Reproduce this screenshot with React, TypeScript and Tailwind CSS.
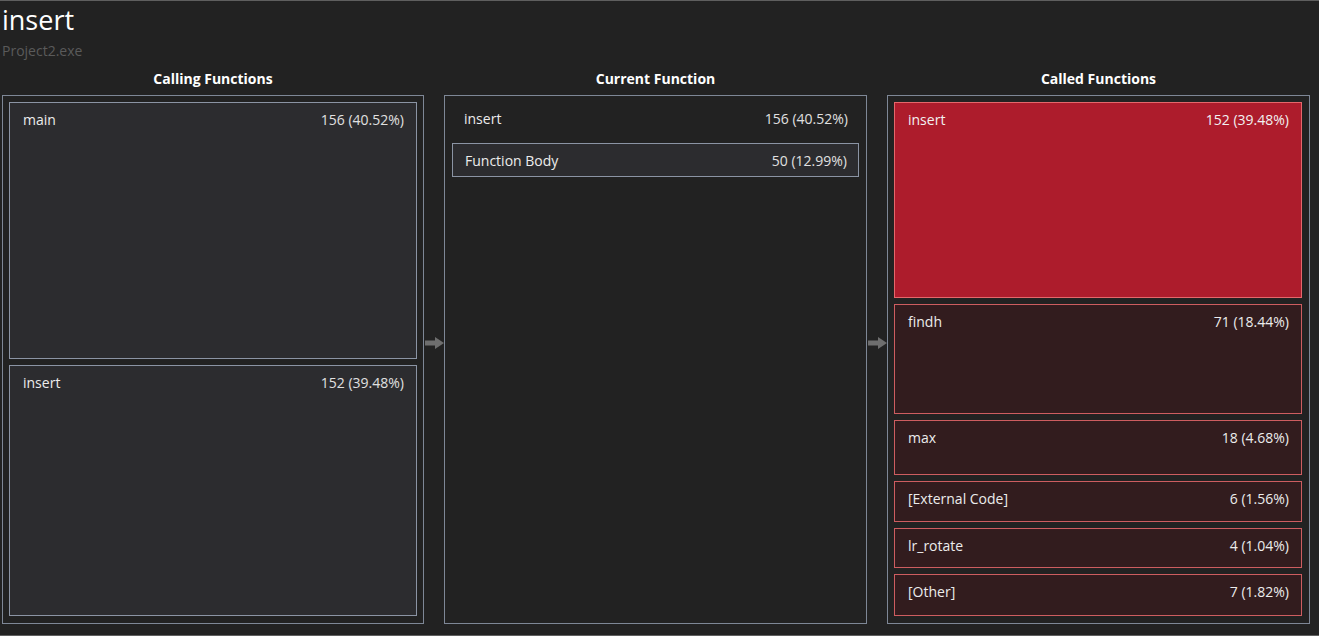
import React from "react";

type Entry = {
  name: string;
  value: string;
  h: string;
};

const calling: Entry[] = [
  { name: "main", value: "156 (40.52%)", h: "h-[257px]" },
  { name: "insert", value: "152 (39.48%)", h: "h-[251px]" },
];

const called: Entry[] = [
  { name: "insert", value: "152 (39.48%)", h: "h-[196px]" },
  { name: "findh", value: "71 (18.44%)", h: "h-[110px]" },
  { name: "max", value: "18 (4.68%)", h: "h-[55px]" },
  { name: "[External Code]", value: "6 (1.56%)", h: "h-[41px]" },
  { name: "lr_rotate", value: "4 (1.04%)", h: "h-[40px]" },
  { name: "[Other]", value: "7 (1.82%)", h: "h-[42px]" },
];

const Arrow = () => (
  <div className="w-[20px] flex justify-center shrink-0 mb-[4px]">
    <svg width="19" height="12" viewBox="0 0 19 12">
      <path d="M0 3.5h10V0l9 6-9 6V8.5H0z" fill="#6e6e6e" />
    </svg>
  </div>
);

const Column = ({
  title,
  width,
  inner,
  children,
}: {
  title: string;
  width: string;
  inner: string;
  children: React.ReactNode;
}) => (
  <div className={`flex flex-col ${width} shrink-0`}>
    <div className="h-[29px] pb-[4px] flex items-center justify-center text-[14px] font-bold text-white">
      {title}
    </div>
    <div className={`h-[529px] border border-[#7e8796] ${inner} flex flex-col gap-[6px]`}>
      {children}
    </div>
  </div>
);

const App = () => {
  return (
    <div
      className="w-[1319px] h-[636px] bg-[#222222] border-t border-b border-[#5f5f5f] overflow-hidden text-[14px]"
      style={{ fontFamily: '"Open Sans", "Noto Sans", sans-serif' }}
    >
      <div className="pl-[2px] pt-[2px]">
        <h1 className="text-[27px] leading-[34px] text-white">insert</h1>
        <div className="text-[14px] leading-[20px] text-[#5a5a5a] mt-[4px]">
          Project2.exe
        </div>
      </div>

      <div className="flex items-center pl-[2px] mt-[5px]">
        <Column title="Calling Functions" width="w-[422px]" inner="p-[6px]">
          {calling.map((e) => (
            <div
              key={e.name}
              className={`${e.h} shrink-0 bg-[#2c2c2f] border border-[#8b94a4] flex justify-between pl-[13px] pr-[12px] pt-[6px] text-[#ececec]`}
            >
              <span>{e.name}</span>
              <span className="text-[#e0e0e0]">{e.value}</span>
            </div>
          ))}
        </Column>

        <Arrow />

        <Column title="Current Function" width="w-[423px]" inner="p-[6px]">
          <div className="flex justify-between pl-[13px] pr-[12px] pt-[6px] h-[35px] text-[#ececec]">
            <span>insert</span>
            <span className="text-[#e0e0e0]">156 (40.52%)</span>
          </div>
          <div className="h-[34px] mx-[1px] bg-[#2c2c2f] border border-[#8b94a4] flex items-center justify-between pl-[12px] pr-[11px] text-[#ececec]">
            <span>Function Body</span>
            <span className="text-[#e0e0e0]">50 (12.99%)</span>
          </div>
        </Column>

        <Arrow />

        <Column title="Called Functions" width="w-[423px]" inner="pt-[6px] pb-[6px] pl-[6px] pr-[7px]">
          {called.map((e, i) => (
            <div
              key={e.name}
              className={
                i === 0
                  ? `${e.h} shrink-0 bg-[#ad1c2c] border border-[#e5676b] flex justify-between pl-[13px] pr-[12px] pt-[6px] text-[#f2f2f2]`
                  : `${e.h} shrink-0 bg-[#321c1e] border border-[#cd5d60] flex justify-between pl-[13px] pr-[12px] pt-[6px] text-[#ececec]`
              }
            >
              <span>{e.name}</span>
              <span>{e.value}</span>
            </div>
          ))}
        </Column>
      </div>
    </div>
  );
};

export default App;
